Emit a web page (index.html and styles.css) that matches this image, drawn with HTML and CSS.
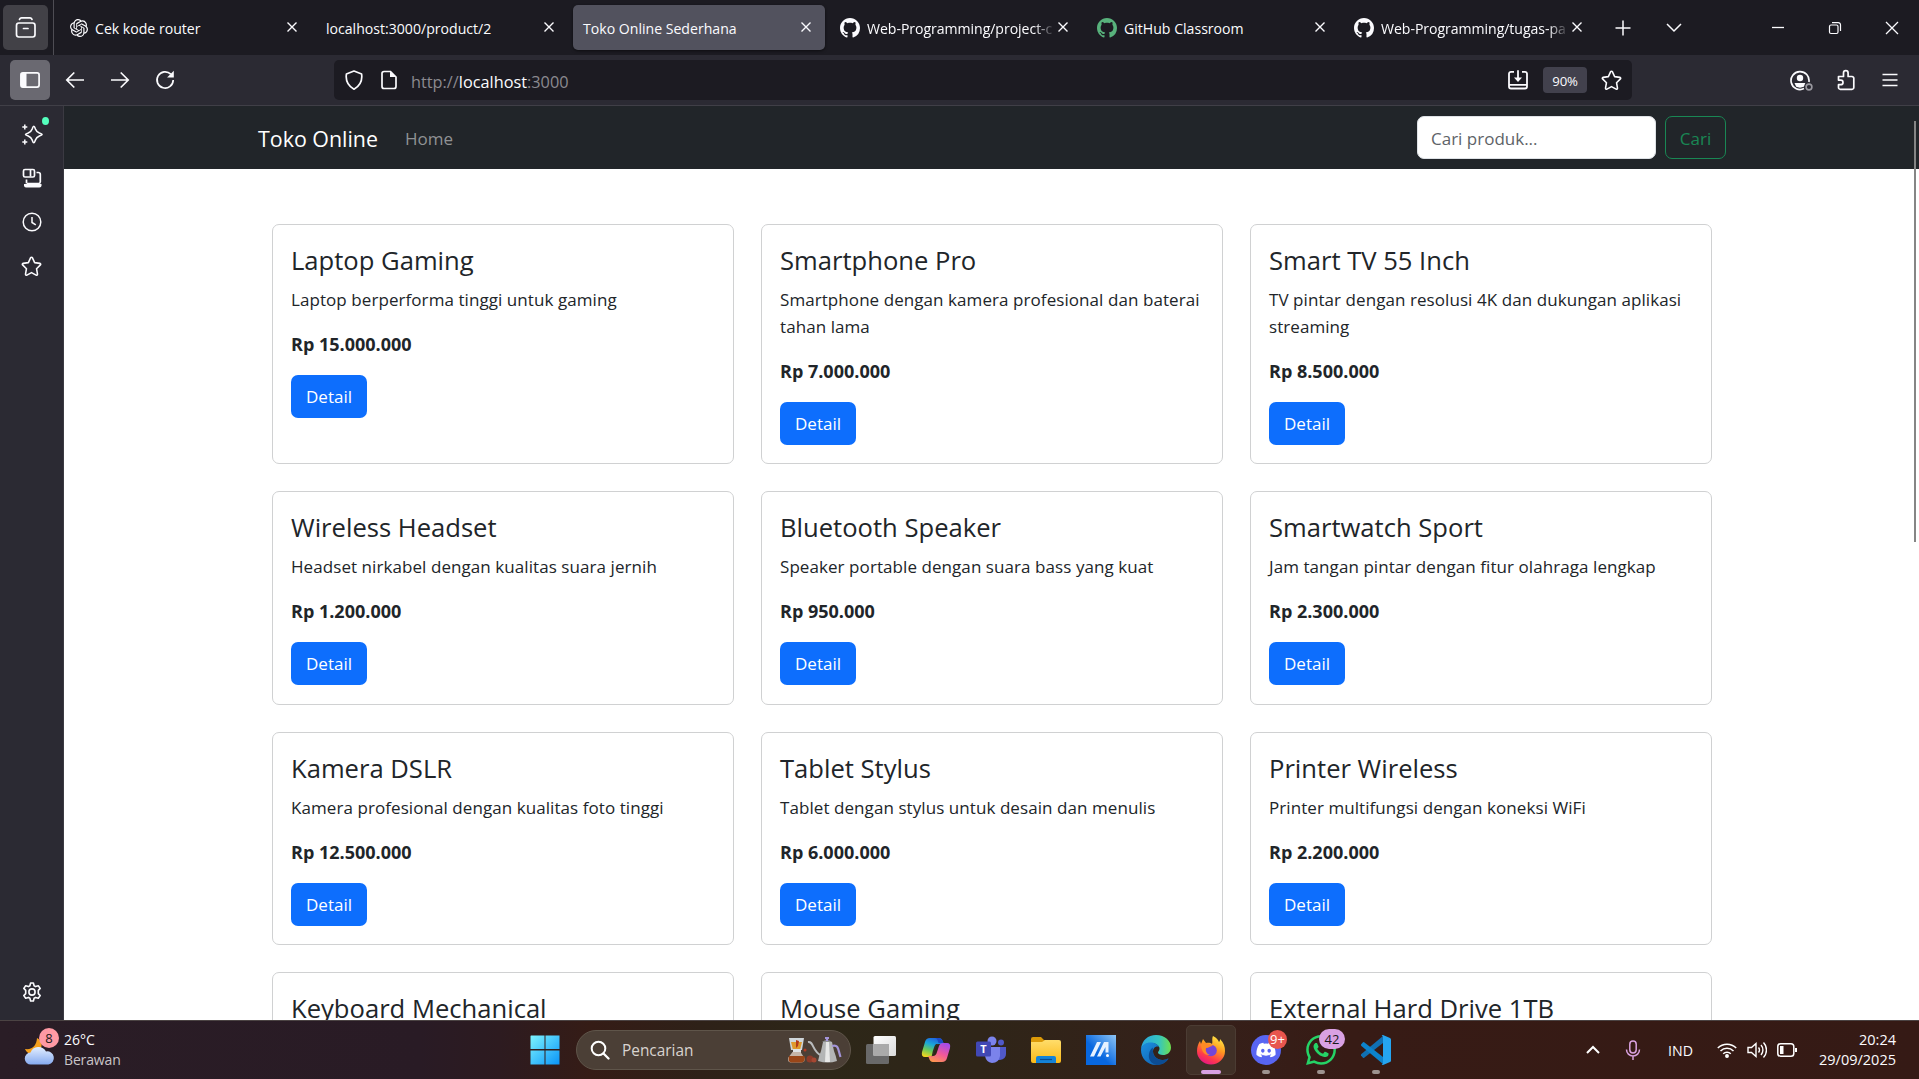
FILE: index.html
```
<!DOCTYPE html>
<html lang="id">
<head>
<meta charset="utf-8">
<title>Toko Online Sederhana</title>
<link rel="stylesheet" href="styles.css">
</head>
<body>
<svg class="defs" width="0" height="0">
  <symbol id="x" viewBox="0 0 12 12"><path d="M1.5 1.5l9 9M10.5 1.5l-9 9" fill="none" stroke="currentColor" stroke-width="1.4"/></symbol>
  <symbol id="github" viewBox="0 0 16 16"><path fill="currentColor" d="M8 0C3.58 0 0 3.58 0 8c0 3.54 2.29 6.53 5.47 7.59.4.07.55-.17.55-.38 0-.19-.01-.82-.01-1.49-2.01.37-2.53-.49-2.69-.94-.09-.23-.48-.94-.82-1.13-.28-.15-.68-.52-.01-.53.63-.01 1.08.58 1.23.82.72 1.21 1.87.87 2.33.66.07-.52.28-.87.51-1.07-1.78-.2-3.64-.89-3.64-3.95 0-.87.31-1.59.82-2.15-.08-.2-.36-1.02.08-2.12 0 0 .67-.21 2.2.82.64-.18 1.32-.27 2-.27s1.36.09 2 .27c1.53-1.04 2.2-.82 2.2-.82.44 1.1.16 1.92.08 2.12.51.56.82 1.27.82 2.15 0 3.07-1.87 3.75-3.65 3.95.29.25.54.73.54 1.48 0 1.07-.01 1.93-.01 2.2 0 .21.15.46.55.38A8.01 8.01 0 0 0 16 8c0-4.42-3.58-8-8-8z"/></symbol>
  <symbol id="star" viewBox="0 0 20 20"><path d="M9.2 1.6a.9.9 0 0 1 1.6 0l2.2 4.7 5 .7a.9.9 0 0 1 .5 1.5l-3.7 3.6.9 5.2a.9.9 0 0 1-1.3.9L10 15.8l-4.4 2.4a.9.9 0 0 1-1.3-.9l.9-5.2-3.7-3.6A.9.9 0 0 1 2 7l5-.7z" fill="none" stroke="currentColor" stroke-width="1.5" stroke-linejoin="round"/></symbol>
</svg>

<header class="tabstrip">
  <div class="tab-overview"><svg width="22" height="22" viewBox="0 0 22 22" fill="none" stroke="currentColor" stroke-width="1.7" stroke-linecap="round"><rect x="1.5" y="6" width="18.5" height="14" rx="2.4"/><path d="M4.5 2.4Q5.200.9 6.500.9H15q1.300 0 2 1.500M8.500 11.500h4.500"/></svg></div>
  <nav class="tabs">
    <div class="tab"><svg class="favicon favicon-chat" width="18" height="18" viewBox="0 0 24 24" fill="currentColor"><path d="M22.2819 9.8211a5.9847 5.9847 0 0 0-.5157-4.9108 6.0462 6.0462 0 0 0-6.5098-2.9A6.0651 6.0651 0 0 0 4.9807 4.1818a5.9847 5.9847 0 0 0-3.9977 2.9 6.0462 6.0462 0 0 0 .7427 7.0966 5.98 5.98 0 0 0 .511 4.9107 6.051 6.051 0 0 0 6.5146 2.9001A5.9847 5.9847 0 0 0 13.2599 24a6.0557 6.0557 0 0 0 5.7718-4.2058 5.9894 5.9894 0 0 0 3.9977-2.9001 6.0557 6.0557 0 0 0-.7475-7.0729zm-9.022 12.6081a4.4755 4.4755 0 0 1-2.8764-1.0408l.1419-.0804 4.7783-2.7582a.7948.7948 0 0 0 .3927-.6813v-6.7369l2.02 1.1686a.071.071 0 0 1 .038.052v5.5826a4.504 4.504 0 0 1-4.4945 4.4944zm-9.6607-4.1254a4.4708 4.4708 0 0 1-.5346-3.0137l.142.0852 4.783 2.7582a.7712.7712 0 0 0 .7806 0l5.8428-3.3685v2.3324a.0804.0804 0 0 1-.0332.0615L9.74 19.9502a4.4992 4.4992 0 0 1-6.1408-1.6464zM2.3408 7.8956a4.485 4.485 0 0 1 2.3655-1.9728V11.6a.7664.7664 0 0 0 .3879.6765l5.8144 3.3543-2.0201 1.1685a.0757.0757 0 0 1-.071 0l-4.8303-2.7865A4.504 4.504 0 0 1 2.3408 7.872zm16.5963 3.8558L13.1038 8.364 15.1192 7.2a.0757.0757 0 0 1 .071 0l4.8303 2.7913a4.4944 4.4944 0 0 1-.6765 8.1042v-5.6772a.79.79 0 0 0-.407-.667zm2.0107-3.0231l-.142-.0852-4.7735-2.7818a.7759.7759 0 0 0-.7854 0L9.409 9.2297V6.8974a.0662.0662 0 0 1 .0284-.0615l4.8303-2.7866a4.4992 4.4992 0 0 1 6.6802 4.66zM8.3065 12.863l-2.02-1.1638a.0804.0804 0 0 1-.038-.0567V6.0742a4.4992 4.4992 0 0 1 7.3757-3.4537l-.142.0805L8.704 5.459a.7948.7948 0 0 0-.3927.6813zm1.0976-2.3654l2.602-1.4998 2.6069 1.4998v2.9994l-2.5974 1.4997-2.6067-1.4997Z"/></svg><span class="tab-label">Cek kode router</span><svg class="close" width="12" height="12"><use href="#x"/></svg></div>
    <div class="tab"><span class="tab-label">localhost:3000/product/2</span><svg class="close" width="12" height="12"><use href="#x"/></svg></div>
    <div class="tab tab-active"><span class="tab-label">Toko Online Sederhana</span><svg class="close" width="12" height="12"><use href="#x"/></svg></div>
    <div class="tab"><svg class="favicon" width="20" height="20"><use href="#github"/></svg><span class="tab-label tab-fade">Web-Programming/project-c</span><svg class="close" width="12" height="12"><use href="#x"/></svg></div>
    <div class="tab"><svg class="favicon favicon-green" width="20" height="20"><use href="#github"/></svg><span class="tab-label">GitHub Classroom</span><svg class="close" width="12" height="12"><use href="#x"/></svg></div>
    <div class="tab"><svg class="favicon" width="20" height="20"><use href="#github"/></svg><span class="tab-label tab-fade">Web-Programming/tugas-pa</span><svg class="close" width="12" height="12"><use href="#x"/></svg></div>
  </nav>
  <div class="strip-tools">
    <svg width="16" height="16" viewBox="0 0 16 16"><path d="M8 .5v15M.5 8h15" stroke="currentColor" stroke-width="1.5"/></svg>
    <svg width="16" height="16" viewBox="0 0 16 16"><path d="M1 4l7 7 7-7" fill="none" stroke="currentColor" stroke-width="1.5"/></svg>
  </div>
  <div class="window-buttons">
    <svg width="14" height="14" viewBox="0 0 14 14"><path d="M1 6.500h12" stroke="currentColor" stroke-width="1.300"/></svg>
    <svg width="14" height="14" viewBox="0 0 14 14" fill="none" stroke="currentColor" stroke-width="1.2"><rect x="1.500" y="4" width="8.500" height="8.500" rx="1.500"/><path d="M4 1.600h6.200a2.300 2.300 0 0 1 2.300 2.300V10"/></svg>
    <svg width="14" height="14" viewBox="0 0 14 14"><path d="M1 1l12 12M13 1L1 13" stroke="currentColor" stroke-width="1.300"/></svg>
  </div>
</header>

<div class="toolbar">
  <div class="sidebar-toggle"><svg width="20" height="16" viewBox="0 0 20 16"><rect x=".9" y=".9" width="18.200" height="14.200" rx="2" fill="none" stroke="currentColor" stroke-width="1.700"/><path d="M1 1h5.500v14H1z" fill="currentColor"/></svg></div>
  <div class="nav-buttons">
    <svg width="20" height="20" viewBox="0 0 20 20"><path d="M19 10H2M9.300 2.500L1.800 10l7.500 7.500" fill="none" stroke="currentColor" stroke-width="1.700"/></svg>
    <svg width="20" height="20" viewBox="0 0 20 20"><path d="M1 10h17M10.700 2.500l7.500 7.500-7.500 7.500" fill="none" stroke="currentColor" stroke-width="1.700"/></svg>
    <svg width="20" height="20" viewBox="0 0 20 20"><path d="M15.800 4.200A8.100 8.100 0 1 0 18.200 10" fill="none" stroke="currentColor" stroke-width="1.700"/><path d="M18.800.8v6.700h-6.700z" fill="currentColor"/></svg>
  </div>
  <div class="urlbar">
    <svg width="20" height="20" viewBox="0 0 20 20"><path d="M10 1l7.600 3c.8 5.500-1.200 11.500-7.600 15.200C3.600 15.500 1.600 9.500 2.400 4z" fill="none" stroke="currentColor" stroke-width="1.700" stroke-linejoin="round"/></svg>
    <svg class="file-icon" width="20" height="20" viewBox="0 0 20 20"><path d="M5 1.500h6.500L17 7v9.500a2 2 0 0 1-2 2H5a2 2 0 0 1-2-2v-13a2 2 0 0 1 2-2z" fill="none" stroke="currentColor" stroke-width="1.700"/><path d="M11 1.500V7h6z" fill="currentColor"/></svg>
    <span class="url">http://<b>localhost</b>:3000</span>
    <svg class="install" width="20" height="20" viewBox="0 0 20 20"><path d="M6 1.800H3a2 2 0 0 0-2 2v12.700a2 2 0 0 0 2 2h14a2 2 0 0 0 2-2V3.800a2 2 0 0 0-2-2h-3M1 14.800h18M10 .3v10" fill="none" stroke="currentColor" stroke-width="1.800"/><path d="M6 7.500h8l-4 4.500z" fill="currentColor"/></svg>
    <span class="zoom">90%</span>
    <svg width="21" height="21"><use href="#star"/></svg>
  </div>
  <div class="toolbar-end">
    <svg width="23" height="21" viewBox="0 0 23 21"><path d="M14 18.600A9 9 0 1 1 18.900 12" fill="none" stroke="currentColor" stroke-width="1.700"/><circle cx="10" cy="8" r="3.200" fill="currentColor"/><path d="M4.500 13h10.800l-1.500 3.700-3.800 1-3.800-1z" fill="currentColor"/><circle cx="19" cy="17" r="2.900" fill="none" stroke="#9a99a0" stroke-width="1.600"/></svg>
    <svg width="20" height="22" viewBox="0 0 20 22"><path d="M2.500 7.500h5V4a2.300 2.300 0 0 1 4.600 0v3.500H16a1.800 1.800 0 0 1 1.800 1.800v9.200a1.800 1.800 0 0 1-1.800 1.800H4.300a1.800 1.800 0 0 1-1.800-1.800v-2.800h2.200a2.300 2.300 0 0 0 0-4.600H2.500z" fill="none" stroke="currentColor" stroke-width="1.700" stroke-linejoin="round"/></svg>
    <svg class="menu-icon" width="16" height="14" viewBox="0 0 16 14"><path d="M.5 1.500h15M.5 7h15M.5 12.500h15" stroke="currentColor" stroke-width="1.500"/></svg>
  </div>
</div>

<div class="browser-body">
  <aside class="sidebar">
    <div class="side-item"><svg width="22" height="22" viewBox="0 0 22 22"><path d="M12.800 3.300c.8 0 1.100 1.200 1.600 2.700.9 2.500 1.400 3 4 4 1.500.5 2.700.8 2.700 1.500s-1.200 1-2.700 1.500c-2.600 1-3.100 1.500-4 4-.5 1.500-.8 2.700-1.600 2.700s-1.100-1.200-1.600-2.700c-.9-2.500-1.400-3-4-4-1.500-.5-2.700-.8-2.700-1.500s1.200-1 2.700-1.500c2.600-1 3.100-1.500 4-4 .5-1.500.8-2.700 1.600-2.700z" fill="none" stroke="currentColor" stroke-width="1.600"/><path d="M3.800 1.500v5M1.300 4h5M3.800 16.500v5M1.300 19h5" stroke="currentColor" stroke-width="1.500"/></svg><i class="dot"></i></div>
    <div class="side-item"><svg width="20" height="20" viewBox="0 0 20 20"><g fill="none" stroke="currentColor" stroke-width="1.700"><rect x="1.500" y="1.500" width="11" height="7.500" rx="1.500"/><path d="M8.500 2v6.500M4.500 11.500v4M14.500 4.500h1.800a2 2 0 0 1 2 2V14a1.700 1.700 0 0 1-1.700 1.500H5"/></g><path d="M2 16h17.500v1.500a2 2 0 0 1-2 2H4a2 2 0 0 1-2-2z" fill="currentColor"/></svg></div>
    <div class="side-item"><svg width="20" height="20" viewBox="0 0 20 20" fill="none" stroke="currentColor" stroke-width="1.500"><circle cx="10" cy="10" r="8.800"/><path d="M10 5v5.500l3.800 2.300"/></svg></div>
    <div class="side-item"><svg width="21" height="21"><use href="#star"/></svg></div>
    <div class="side-item side-settings"><svg width="20" height="20" viewBox="0 0 20 20" fill="none" stroke="currentColor" stroke-width="1.600" stroke-linejoin="round"><path d="M8.600 1h2.800l.7 2.700 1.500.9 2.700-.8 1.900 2.600-1.900 2v3.200l1.900 2-1.900 2.600-2.700-.8-1.500.9-.7 2.700H8.600l-.7-2.700-1.500-.9-2.700.8-1.900-2.600 1.900-2V8.400l-1.900-2 1.900-2.600 2.700.8 1.500-.9z"/><circle cx="10" cy="10" r="3.100"/></svg></div>
  </aside>

  <main class="page">
    <nav class="navbar">
      <a class="brand">Toko Online</a>
      <a class="nav-link">Home</a>
      <form class="search">
        <input class="search-input" type="text" placeholder="Cari produk...">
        <button class="search-button" type="button">Cari</button>
      </form>
    </nav>
    <section class="products">
      <article class="card"><h4>Laptop Gaming</h4><p>Laptop berperforma tinggi untuk gaming</p><p class="price">Rp 15.000.000</p><a class="btn">Detail</a></article>
      <article class="card"><h4>Smartphone Pro</h4><p>Smartphone dengan kamera profesional dan baterai tahan lama</p><p class="price">Rp 7.000.000</p><a class="btn">Detail</a></article>
      <article class="card"><h4>Smart TV 55 Inch</h4><p>TV pintar dengan resolusi 4K dan dukungan aplikasi streaming</p><p class="price">Rp 8.500.000</p><a class="btn">Detail</a></article>
      <article class="card"><h4>Wireless Headset</h4><p>Headset nirkabel dengan kualitas suara jernih</p><p class="price">Rp 1.200.000</p><a class="btn">Detail</a></article>
      <article class="card"><h4>Bluetooth Speaker</h4><p>Speaker portable dengan suara bass yang kuat</p><p class="price">Rp 950.000</p><a class="btn">Detail</a></article>
      <article class="card"><h4>Smartwatch Sport</h4><p>Jam tangan pintar dengan fitur olahraga lengkap</p><p class="price">Rp 2.300.000</p><a class="btn">Detail</a></article>
      <article class="card"><h4>Kamera DSLR</h4><p>Kamera profesional dengan kualitas foto tinggi</p><p class="price">Rp 12.500.000</p><a class="btn">Detail</a></article>
      <article class="card"><h4>Tablet Stylus</h4><p>Tablet dengan stylus untuk desain dan menulis</p><p class="price">Rp 6.000.000</p><a class="btn">Detail</a></article>
      <article class="card"><h4>Printer Wireless</h4><p>Printer multifungsi dengan koneksi WiFi</p><p class="price">Rp 2.200.000</p><a class="btn">Detail</a></article>
      <article class="card"><h4>Keyboard Mechanical</h4></article>
      <article class="card"><h4>Mouse Gaming</h4></article>
      <article class="card"><h4>External Hard Drive 1TB</h4></article>
    </section>
    <div class="scrollbar"></div>
  </main>
</div>

<footer class="taskbar">
  <div class="weather">
    <div class="weather-icon">
      <svg width="32" height="32" viewBox="0 0 32 32"><defs><linearGradient id="cloud" x2="0" y2="1"><stop stop-color="#e3eeff"/><stop offset="1" stop-color="#86aaf0"/></linearGradient></defs><path d="M13 4c-.5 7-4 12-12 11 2 5 8 7 13 3s5-11-1-14z" fill="#f5a01d"/><path d="M7 30.500a6 6 0 0 1-.5-12 8.500 8.500 0 0 1 15.500-1A6.500 6.500 0 0 1 24.500 30.500z" fill="url(#cloud)"/></svg>
      <span class="weather-badge">8</span>
    </div>
    <div class="weather-text"><span>26°C</span><span class="muted">Berawan</span></div>
  </div>

  <div class="apps">
    <svg class="start" width="30" height="30" viewBox="0 0 30 30"><defs><linearGradient id="win" x2="1" y2="1"><stop stop-color="#7df4ff"/><stop offset="1" stop-color="#0a94f7"/></linearGradient></defs><path fill="url(#win)" d="M1 .5h13.500V14H.5V1zM15.500.5h14V14h-14zM.5 15.500h14v14H.5zM15.500 15.500h14v14h-14z"/></svg>
    <div class="task-search">
      <svg width="20" height="20" viewBox="0 0 20 20"><circle cx="8.500" cy="8.500" r="6.800" fill="none" stroke="#fff" stroke-width="2"/><path d="M13.500 13.500l5 5" stroke="#fff" stroke-width="2.300" stroke-linecap="round"/></svg>
      <span>Pencarian</span>
      <svg class="coffee" width="56" height="28" viewBox="0 0 56 28">
        <path d="M2 2h15l-2 12H4z" fill="#cfd6da"/><path d="M4 6h11l-2 8H6z" fill="#e09a2d"/><path d="M9 4l3 1-1 5-2 2z" fill="#b33a1b"/><path d="M6 13h8v4H6z" fill="#dfe3e6"/><path d="M5.500 16h8l4 6q1 4-3 4.500h-11Q.5 26 1 22z" fill="#c5b5a8"/><path d="M2 20h15.500q1 6-3 6.500h-10Q.5 26 2 20z" fill="#9a4618"/>
        <circle cx="18" cy="14" r="1.500" fill="#b43a22"/><circle cx="23" cy="23" r="3.500" fill="#8d3b2a"/><circle cx="27" cy="24" r="2.500" fill="#a54732"/>
        <path d="M21 6c6-1 4 10 14 14" fill="none" stroke="#b9bbbd" stroke-width="2"/><path d="M36 6h9l2 9q2 5 3 10-9 3-19 0 1-5 3-10z" fill="#b4b5b6"/><path d="M39 6h3l1 20h-5z" fill="#e8e8e8"/><path d="M35 6q5-4 10 0z" fill="#8f9092"/><path d="M38 2h4M40 2v3M45 10c7-2 6 4 8.500 11" fill="none" stroke="#a394d8" stroke-width="2.200"/>
      </svg>
    </div>
    <div class="app-list">
      <div class="app"><svg width="30" height="30" viewBox="0 0 30 30"><defs><linearGradient id="tv" x2="1" y2="1"><stop stop-color="#fff"/><stop offset="1" stop-color="#dadada"/></linearGradient></defs><rect x="0" y="9" width="23" height="20" rx="1.500" fill="#696969"/><rect x="7.500" y="1" width="22.500" height="20" rx="1.500" fill="url(#tv)"/><path d="M7.500 9H23v12H7.500z" fill="#aaa"/></svg></div>
      <div class="app"><svg width="30" height="28" viewBox="0 0 30 28"><defs><linearGradient id="cp1" x1=".6" x2=".2" y2="1"><stop stop-color="#1f62e0"/><stop offset=".35" stop-color="#1aa8d8"/><stop offset=".65" stop-color="#69c95c"/><stop offset="1" stop-color="#f5d51d"/></linearGradient><linearGradient id="cp2" x1=".7" x2=".2" y2="1"><stop stop-color="#a64be8"/><stop offset=".5" stop-color="#f0589a"/><stop offset="1" stop-color="#ff9a4b"/></linearGradient></defs><path d="M9 2h9q3 0 4 4l1 2h-5q-3 0-4 4l-2 6q-1 3-4 3H4q-4 0-3-5L4 6q1-4 5-4z" fill="url(#cp1)"/><path d="M21 26h-9q-3 0-4-4l-1-2h5q3 0 4-4l2-6q1-3 4-3h4q4 0 3 5l-3 10q-1 4-5 4z" fill="url(#cp2)"/><path d="M15 8h2.500q-2 1-3 4l-1.800 6q-.7 2-2 2.500l1-5 1-3q.8-3.500 2.300-4.500z" fill="#342b20"/><path d="M17 2q4 0 5.500 5h-5l-1-3q-.6-2-2.500-2z" fill="#1b4ac5"/></svg></div>
      <div class="app"><svg width="30" height="28" viewBox="0 0 30 28"><circle cx="16" cy="5" r="4.500" fill="#7b83eb"/><circle cx="25" cy="6.500" r="3" fill="#5059c9"/><path d="M18 11h12v7q0 5-6 6h-6z" fill="#5059c9"/><path d="M9 11h15v9q-1 7-8 7-6-1-7-7z" fill="#7b83eb"/><rect y="5.500" width="15" height="15" rx="1.500" fill="#4148b5"/><text x="7.500" y="17" class="teams-letter">T</text></svg></div>
      <div class="app"><svg width="30" height="28" viewBox="0 0 30 28"><defs><linearGradient id="fo" x2="0" y2="1"><stop stop-color="#ffdd6b"/><stop offset="1" stop-color="#fbb917"/></linearGradient></defs><path d="M0 3q0-2 2-2h8l3 3h15v6H0z" fill="#dc9a08"/><path d="M0 6h11l3-2h14q2 0 2 2v19q0 2-2 2H2q-2 0-2-2z" fill="url(#fo)"/><path d="M5 27v-5q0-2 2-2h16q2 0 2 2v5z" fill="#1483d8"/><path d="M9 23.500h12" stroke="#0a4c92" stroke-width="1.200"/></svg></div>
      <div class="app"><svg width="30" height="30" viewBox="0 0 30 30"><defs><linearGradient id="as" y1="1" x2="1" y2="0"><stop offset=".4" stop-color="#0868e0"/><stop offset="1" stop-color="#8ec6f5"/></linearGradient></defs><path d="M0 0h30v30H0z" fill="url(#as)"/><path d="M4 21.500L11 7h4L8 21.500zM11 21.500L18 7h4.500v10.500h-3V12L14.500 21.500z" fill="#e6f2ff"/><circle cx="21.500" cy="20.500" r="1.500" fill="#fff"/></svg></div>
      <div class="app"><svg width="30" height="30" viewBox="0 0 30 30"><defs><linearGradient id="e1" x2="1"><stop stop-color="#2aa5dd"/><stop offset=".6" stop-color="#35c5c0"/><stop offset="1" stop-color="#6ee04f"/></linearGradient><linearGradient id="e2" x2="1" y2="1"><stop stop-color="#1b8fe0"/><stop offset="1" stop-color="#0f5aa8"/></linearGradient></defs><path d="M0 14C1 5 7 0 15 0c9 0 15 6 15 12.500 0 5-4 7.500-8 7.500-3 0-5-1-5-2.500 0-1 1.500-1.500 1.500-4C18.500 10 14 8 10 8 5 8 1 11 0 14z" fill="url(#e1)"/><path d="M0 15c0-5 5-7.500 9.500-7.500 4 0 7.500 2 8.500 4.500-3-1.500-6 1-6 4.500 0 5 5 9 10 8.500 2 0 4-1 5-1.500.5 0 .5.300.3.600C25 28 20 30 15 30 6 30 0 23 0 15z" fill="url(#e2)"/><path d="M12 16.500c0 5 5 9 10 8.500 2 0 4-1 5-1.500C25 28 20 30 16 30c-6-1-9-6-8-11 .5-3 2-5.500 4-6.500-.3 1-.3 2 0 4z" fill="#0c4c93"/></svg></div>
      <div class="app app-active"><svg width="30" height="30" viewBox="0 0 30 30"><defs><linearGradient id="ff" x1=".8" x2=".3" y2="1"><stop stop-color="#fff04a"/><stop offset=".4" stop-color="#ff9a1f"/><stop offset=".75" stop-color="#ff3a4b"/><stop offset="1" stop-color="#e31587"/></linearGradient></defs><path d="M17 1c4 2 5 4 6 6 1-1 1-2 1-3 4 4 5 8 5 12a14 13.500 0 0 1-28 0c0-4 1-7 3-10l1 3 2-5 3 4c2-.5 5-.3 6 1 1-2-.5-5 1-8z" fill="url(#ff)"/><circle cx="15" cy="15.500" r="5.800" fill="#7446d8"/><path d="M5 9c4-2 8-1 12 2-3 0-4 2-7 2-1 3 1 6 4 7-6 1-9-5-9-11z" fill="#ff8a25"/></svg><i class="run run-active"></i></div>
      <div class="app"><svg width="30" height="30" viewBox="0 0 30 30"><circle cx="15" cy="15" r="15" fill="#5865f2"/><g transform="translate(5.400 5.400) scale(.8)"><path fill="#fff" d="M20.317 4.370a19.790 19.790 0 0 0-4.885-1.515.074.074 0 0 0-.079.037c-.211.375-.445.865-.608 1.250a18.270 18.270 0 0 0-5.487 0 12.640 12.640 0 0 0-.617-1.250.077.077 0 0 0-.079-.037A19.740 19.740 0 0 0 3.677 4.370a.070.070 0 0 0-.032.028C.533 9.046-.32 13.580.099 18.058a.082.082 0 0 0 .031.056 19.900 19.900 0 0 0 5.993 3.030.078.078 0 0 0 .084-.028c.462-.63.874-1.295 1.226-1.994a.076.076 0 0 0-.042-.106 13.110 13.110 0 0 1-1.872-.892.077.077 0 0 1-.008-.128c.126-.094.252-.192.372-.291a.074.074 0 0 1 .078-.011c3.928 1.793 8.180 1.793 12.061 0a.074.074 0 0 1 .079.010c.12.099.246.198.373.292a.077.077 0 0 1-.007.128 12.300 12.300 0 0 1-1.873.891.077.077 0 0 0-.041.107c.36.698.772 1.363 1.225 1.993a.076.076 0 0 0 .084.029 19.840 19.840 0 0 0 6.002-3.030.077.077 0 0 0 .032-.055c.5-5.177-.838-9.674-3.549-13.660a.061.061 0 0 0-.031-.029zM8.020 15.331c-1.183 0-2.157-1.086-2.157-2.419s.956-2.419 2.157-2.419c1.211 0 2.176 1.095 2.157 2.419 0 1.333-.956 2.419-2.157 2.419zm7.975 0c-1.183 0-2.157-1.086-2.157-2.419s.955-2.419 2.157-2.419c1.211 0 2.176 1.095 2.157 2.419 0 1.333-.946 2.419-2.157 2.419z"/></g></svg><span class="badge badge-red">9+</span><i class="run"></i></div>
      <div class="app"><svg width="30" height="30" viewBox="0 0 24 24"><path fill="#25d366" d="M17.472 14.382c-.297-.149-1.758-.867-2.030-.967-.273-.099-.471-.148-.670.150-.197.297-.767.966-.940 1.164-.173.199-.347.223-.644.075-.297-.150-1.255-.463-2.390-1.475-.883-.788-1.480-1.761-1.653-2.059-.173-.297-.018-.458.130-.606.134-.133.298-.347.446-.520.149-.174.198-.298.298-.497.099-.198.050-.371-.025-.520-.075-.149-.669-1.612-.916-2.207-.242-.579-.487-.500-.669-.510-.173-.008-.371-.010-.570-.010-.198 0-.520.074-.792.372-.272.297-1.040 1.016-1.040 2.479 0 1.462 1.065 2.875 1.213 3.074.149.198 2.096 3.200 5.077 4.487.709.306 1.262.489 1.694.625.712.227 1.360.195 1.871.118.571-.085 1.758-.719 2.006-1.413.248-.694.248-1.289.173-1.413-.074-.124-.272-.198-.570-.347m-5.421 7.403h-.004a9.870 9.870 0 0 1-5.031-1.378l-.361-.214-3.741.982.998-3.648-.235-.374a9.860 9.860 0 0 1-1.510-5.260c.001-5.450 4.436-9.884 9.888-9.884 2.640 0 5.122 1.030 6.988 2.898a9.825 9.825 0 0 1 2.893 6.994c-.003 5.450-4.437 9.884-9.885 9.884m8.413-18.297A11.815 11.815 0 0 0 12.050 0C5.495 0 .160 5.335.157 11.892c0 2.096.547 4.142 1.588 5.945L.057 24l6.305-1.654a11.882 11.882 0 0 0 5.683 1.448h.005c6.554 0 11.890-5.335 11.893-11.893a11.821 11.821 0 0 0-3.480-8.413z"/></svg><span class="badge badge-pink">42</span><i class="run"></i></div>
      <div class="app"><svg width="30" height="30" viewBox="0 0 30 30"><path d="M0 20.500l2 2.200q.6.400 1.200 0L22 8V1L.4 19q-.6.700-.4 1.500z" fill="#1070b3"/><path d="M0 9.500l2-2.200q.6-.4 1.200 0L22 22v7L.4 11q-.6-.7-.4-1.500z" fill="#0c83cc"/><path d="M22 0l7 3q1 .5 1 1.500v21q0 1-1 1.500l-7 3q-1 0-1.300-.7l1.300-.8V1.500L20.700.7Q21 0 22 0z" fill="#25a5f0"/></svg><i class="run"></i></div>
    </div>
  </div>

  <div class="tray">
    <svg class="tray-up" width="14" height="10" viewBox="0 0 14 10"><path d="M1 8l6-6 6 6" fill="none" stroke="#fff" stroke-width="2"/></svg>
    <svg class="tray-mic" width="16" height="20" viewBox="0 0 16 20" fill="none" stroke="#d9a1df" stroke-width="1.500"><rect x="4.800" y="1" width="6.400" height="12" rx="3.200"/><path d="M1.500 9.500a6.500 6.500 0 0 0 13 0M8 16v4"/></svg>
    <span class="tray-lang">IND</span>
    <svg class="tray-wifi" width="20" height="16" viewBox="0 0 20 16" fill="none" stroke="#fff" stroke-width="1.500"><path d="M.8 6a13 13 0 0 1 18.400 0M3.500 9a9.200 9.200 0 0 1 13 0M6.200 11.800a5.400 5.400 0 0 1 7.600 0"/><circle cx="10" cy="14" r="1.200" fill="#fff"/></svg>
    <svg class="tray-sound" width="20" height="18" viewBox="0 0 20 18" fill="none" stroke="#fff" stroke-width="1.400"><path d="M1 6.500h3.500L9 2.500v13l-4.500-4H1zM11.500 6.500a4 4 0 0 1 0 5M14 4a7.500 7.500 0 0 1 0 10M16.500 1.500a11 11 0 0 1 0 15"/></svg>
    <svg class="tray-battery" width="20" height="14" viewBox="0 0 20 14"><rect x=".8" y=".8" width="16" height="12.400" rx="2.800" fill="none" stroke="#fff" stroke-width="1.500"/><path d="M3 3h3.500v8H3zM18 5h2v4h-2z" fill="#fff"/></svg>
    <div class="clock"><span>20:24</span><span>29/09/2025</span></div>
  </div>
</footer>
</body>
</html>
```
FILE: styles.css
```
* { box-sizing: border-box; }
html, body { height: 100%; margin: 0; overflow: hidden; }
body { display: flex; flex-direction: column; font-family: "Open Sans", "Noto Sans", sans-serif; font-size: 14.1px; color: #fbfbfe; background: #1c1b22; }
svg { display: block; flex: none; }
.defs { position: absolute; }

/* browser tab strip */
.tabstrip { flex: none; display: flex; align-items: center; height: 55px; background: #1c1b22; padding-left: 3px; }
.tab-overview { width: 45px; height: 45px; border-radius: 5px; background: #424147; display: grid; place-items: center; }
.tabs { display: flex; gap: 5px; height: 55px; padding: 5px 0 5px 5px; margin-left: 5px; border-left: 1px solid #4e4d54; align-items: center; }
.tab { display: flex; align-items: center; width: 252px; height: 45px; padding: 0 13px 0 10px; border-radius: 5px; }
.tab-active { background: #52525e; box-shadow: 0 1px 3px #0008; }
.favicon { margin-right: 7px; }
.favicon-chat { margin-left: 1px; }
.favicon-green { color: #58b27c; }
.tab-label { flex: 1; min-width: 0; white-space: nowrap; line-height: 24px; padding-top: 2px; }
.tab-fade { letter-spacing: -.05px; -webkit-mask-image: linear-gradient(90deg, #000 88%, transparent 99%); mask-image: linear-gradient(90deg, #000 88%, transparent 99%); }
.close { margin-top: -1px; }
.strip-tools { display: flex; gap: 35px; margin-left: 19px; }
.window-buttons { display: flex; gap: 43px; margin-left: auto; padding-right: 20px; }

/* browser toolbar */
.toolbar { flex: none; display: flex; align-items: center; height: 51px; background: #2b2a33; border-bottom: 1px solid #403f47; padding: 0 21px 0 10px; }
.sidebar-toggle { width: 40px; height: 40px; border-radius: 5px; background: #6a6971; display: grid; place-items: center; }
.nav-buttons { display: flex; gap: 25px; margin-left: 15px; }
.urlbar { display: flex; align-items: center; width: 1298px; height: 40px; margin-left: 159px; padding: 0 10px; border-radius: 5px; background: #1c1b22; }
.file-icon { margin-left: 15px; }
.url { font-size: 16.300px; color: #8b8a90; margin: 3px 0 0 12px; }
.url b { font-weight: 400; color: #fbfbfe; }
.install { margin-left: auto; }
.zoom { width: 44px; height: 26px; margin: 0 14px 0 15px; border-radius: 4px; background: #42414d; font-size: 13.200px; letter-spacing: -.2px; line-height: 28px; text-align: center; }
.toolbar-end { display: flex; align-items: center; gap: 23px; margin-left: auto; }
.menu-icon { margin-left: 3px; }

/* browser sidebar */
.browser-body { flex: 1; min-height: 0; display: flex; }
.sidebar { flex: none; width: 64px; background: #2b2a33; border-right: 1px solid #3b3a42; display: flex; flex-direction: column; padding-top: 6px; }
.side-item { position: relative; height: 44px; display: grid; place-items: center; }
.side-settings { margin-top: auto; margin-bottom: 6px; }
.dot { position: absolute; left: 42px; top: 5px; width: 7px; height: 8px; border-radius: 50%; background: #54ffbd; }

/* shop page */
.page { position: relative; flex: 1; min-width: 0; background: #fff; color: #212529; overflow: hidden; }
.navbar { display: flex; align-items: center; height: 63px; padding: 0 193px 0 194px; background: #212529; }
.brand { font-size: 21.400px; color: #fff; padding-top: 2px; }
.nav-link { font-size: 17px; color: #909294; margin-left: 27px; padding-top: 2px; }
.search { display: flex; gap: 9px; margin-left: auto; }
.search-input { width: 239px; height: 43px; padding: 1px 13px 0; border: 1px solid #dee2e6; border-radius: 7px; font: 17px "Open Sans", sans-serif; background: #fff; }
.search-input::placeholder { color: #5e6367; opacity: 1; }
.search-button { width: 61px; height: 43px; padding: 2px 0 0; border: 1px solid #198754; border-radius: 7px; background: none; color: #198754; font: 17px "Open Sans", sans-serif; }
.products { display: grid; grid-template-columns: repeat(3, 462px); gap: 27.200px 27px; padding: 55px 0 0 208px; }
.card { min-height: 213.400px; border: 1px solid #d0d1d2; border-radius: 7px; padding: 18px; }
.card h4 { margin: 0 0 9px; padding-top: 1px; font-size: 25.600px; font-weight: 400; line-height: 33px; white-space: nowrap; }
.card p { margin: 0 0 18px; font-size: 17px; letter-spacing: .07px; line-height: 27px; }
.card .price { margin-bottom: 17px; font-size: 18px; letter-spacing: 0; font-weight: 700; }
.btn { display: block; width: 76px; height: 43px; border-radius: 7px; background: #0d6efd; color: #fff; font-size: 17px; line-height: 44px; text-align: center; }
.scrollbar { position: absolute; right: 3px; top: 15px; width: 2px; height: 421px; background: #858585; }

/* desktop taskbar */
.taskbar { flex: none; display: flex; align-items: center; height: 59px; border-top: 1px solid #4b4343; background: linear-gradient(90deg, #2a1d26 0, #291b25 420px, #2d1b20 500px, #351c16 590px, #2e2118 700px, #2d2718 830px, #2f2518 980px, #35201a 1200px, #371b15 1350px, #351a15 100%); }
.weather { display: flex; align-items: center; width: 528px; padding-left: 24px; }
.weather-icon { position: relative; width: 40px; }
.weather-badge { position: absolute; left: 15px; top: -6px; width: 20px; height: 20px; border-radius: 50%; background: #ff99a4; color: #1a1a1a; font-size: 13px; line-height: 20px; text-align: center; }
.weather-text { display: flex; flex-direction: column; font-size: 14px; line-height: 20px; }
.muted { color: #c9c4c8; letter-spacing: -.15px; }
.apps { display: flex; align-items: center; }
.start { margin-left: 1.500px; }
.task-search { display: flex; align-items: center; width: 275px; height: 40px; margin-left: 16.500px; padding: 0 7px 0 13px; border: 1px solid #5f554a; border-radius: 20px; background: #4b3f36; font-size: 15.400px; color: #d8d3cf; }
.task-search span { margin-left: 12px; padding-top: 1px; }
.coffee { margin-left: auto; }
.app-list { display: flex; gap: 5px; margin-left: 5px; }
.app { position: relative; width: 50px; height: 50px; display: grid; place-items: center; border-radius: 5px; }
.app-active { background: #403027; border: 1px solid #4b3c33; }
.teams-letter { fill: #fff; font: 700 11px "Open Sans", sans-serif; text-anchor: middle; }
.run { position: absolute; left: 21px; bottom: 1px; width: 8px; height: 4px; border-radius: 2px; background: #9d938f; }
.run-active { left: 14px; bottom: 0; width: 20px; background: #d9a1e3; }
.badge { position: absolute; top: 0; height: 19px; border-radius: 10px; font-size: 13px; line-height: 19px; text-align: center; }
.badge-red { left: 27px; width: 19px; top: 5px; background: #e8554e; color: #fff; }
.badge-pink { left: 23px; width: 26px; top: 4px; height: 20px; line-height: 20px; background: #d9a1e3; color: #1a1a1a; }
.tray { display: flex; align-items: center; margin-left: auto; padding-right: 23px; }
.tray-mic { margin-left: 25px; }
.tray-lang { margin-left: 27px; width: 26px; font-size: 14.200px; }
.tray-wifi { margin-left: 23px; }
.tray-sound, .tray-battery { margin-left: 10px; }
.clock { width: 99px; display: flex; flex-direction: column; text-align: right; font-size: 14.500px; line-height: 20px; }
```
